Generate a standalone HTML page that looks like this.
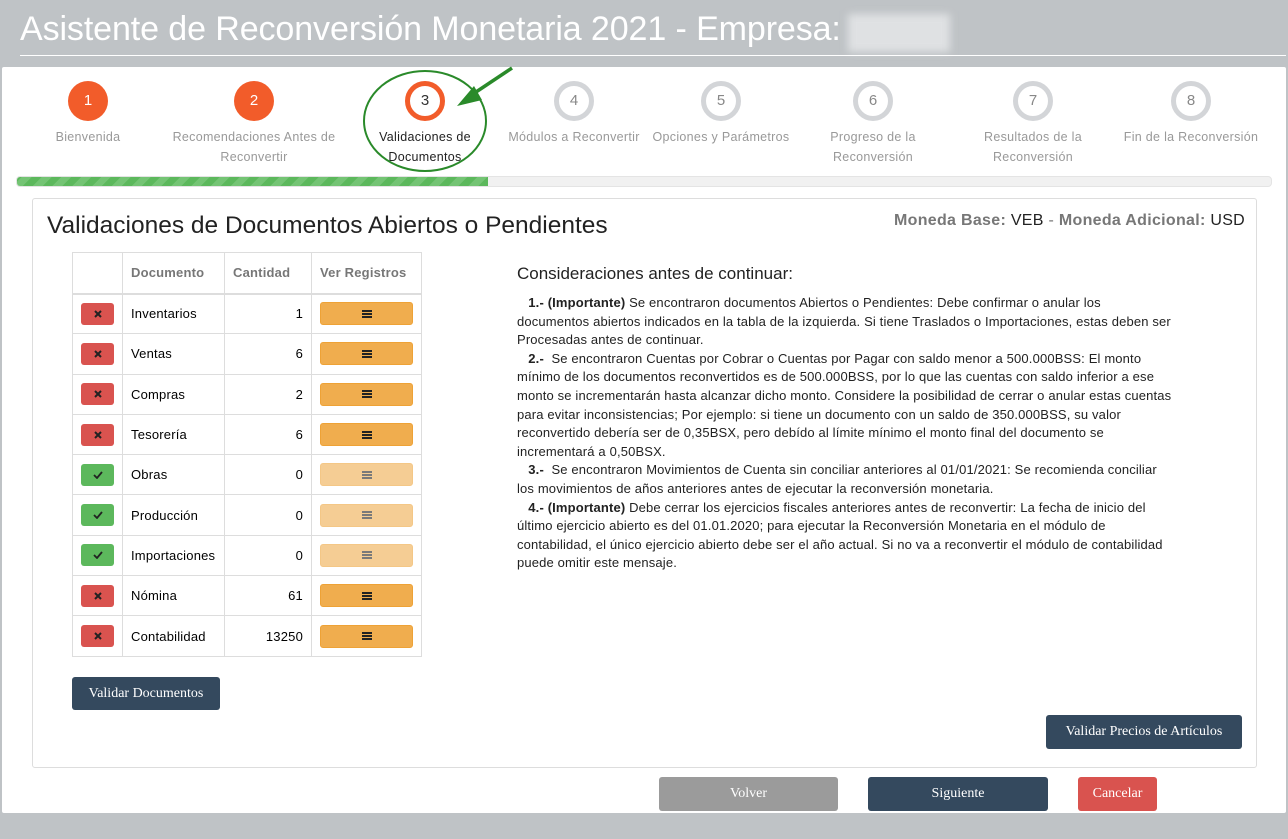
<!DOCTYPE html>
<html><head><meta charset="utf-8"><style>
*{box-sizing:border-box;margin:0;padding:0}
body{width:1288px;height:839px;background:#bfc3c6;font-family:"Liberation Sans",sans-serif;position:relative;overflow:hidden}
.abs{position:absolute}
.title{left:20px;top:10px;color:#fff;font-size:34px;letter-spacing:-0.1px;white-space:nowrap}
.blur{left:848px;top:14px;width:102px;height:38px;background:#dfe1e3;filter:blur(4px)}
.hr{left:20px;top:55px;width:1266px;height:1px;background:#fff}
.panel{left:2px;top:67px;width:1284px;height:746px;background:#fff;border-radius:2px}
.step{position:absolute;width:40px;height:40px;border-radius:50%;top:81px;text-align:center;line-height:40px;font-size:15px}
.done{background:#f25c2a;color:#fff}
.cur{border:5px solid #f25c2a;line-height:30px;color:#333;background:#fff}
.todo{border:5px solid #d3d5d8;line-height:30px;color:#888;background:#fff}
.lbl{position:absolute;top:127px;font-size:12.5px;color:#999;text-align:center;line-height:20px;letter-spacing:.3px;white-space:nowrap}
.bar{left:16px;top:176px;width:1256px;height:11px;background:#f1f1f1;border-radius:4px;overflow:hidden;border:1px solid #e4e4e4}
.bar div{width:471px;height:100%;background:repeating-linear-gradient(-45deg,#5cb85c 0 7px,#74c474 7px 14px)}
.box{left:32px;top:198px;width:1225px;height:570px;border:1px solid #ddd;border-radius:3px}
table{position:absolute;left:72px;top:252px;border-collapse:collapse;font-size:13px}
td,th{border:1px solid #ddd;height:40.3px;padding:0 8px;letter-spacing:.2px}
th{color:#777;font-weight:bold;text-align:left;height:41px;border-bottom:2px solid #ddd}
.x,.ok{width:33px;height:22px;border-radius:3px;margin:auto;display:flex;align-items:center;justify-content:center}
.x{background:#d9534f}.ok{background:#5cb85c}
.vb{width:93px;height:23px;border-radius:3px;background:#f0ad4e;border:1px solid #eea236;margin:auto;display:flex;align-items:center;justify-content:center}
.vb.dis{opacity:.6}
.li{display:inline-block;width:10px;height:8px;background:linear-gradient(#222 0 2px,transparent 2px 3px,#222 3px 5px,transparent 5px 6px,#222 6px 8px)}
.btn{position:absolute;color:#fff;font-family:"Liberation Serif",serif;font-size:14px;display:flex;align-items:center;justify-content:center;border-radius:3px}
.nv{background:#34495e}
.txt{left:517px;top:294px;font-size:13px;line-height:18.6px;color:#222;white-space:nowrap;letter-spacing:.15px}
</style></head><body>
<div class="abs title">Asistente de Reconversión Monetaria 2021 - Empresa:</div>
<div class="abs blur"></div>
<div class="abs hr"></div>
<div class="abs panel"></div>
<div class="step done" style="left:68px">1</div>
<div class="step done" style="left:234px">2</div>
<div class="step cur" style="left:405px">3</div>
<div class="step todo" style="left:554px">4</div>
<div class="step todo" style="left:701px">5</div>
<div class="step todo" style="left:853px">6</div>
<div class="step todo" style="left:1013px">7</div>
<div class="step todo" style="left:1171px">8</div>
<div class="lbl" style="left:38px;width:100px">Bienvenida</div>
<div class="lbl" style="left:164px;width:180px">Recomendaciones Antes de<br>Reconvertir</div>
<div class="lbl" style="left:365px;width:120px;color:#222">Validaciones de<br>Documentos</div>
<div class="lbl" style="left:504px;width:140px">Módulos a Reconvertir</div>
<div class="lbl" style="left:646px;width:150px">Opciones y Parámetros</div>
<div class="lbl" style="left:813px;width:120px">Progreso de la<br>Reconversión</div>
<div class="lbl" style="left:973px;width:120px">Resultados de la<br>Reconversión</div>
<div class="lbl" style="left:1121px;width:140px">Fin de la Reconversión</div>
<svg class="abs" style="left:360px;top:64px" width="160" height="114"><ellipse cx="65" cy="57" rx="61" ry="50" fill="none" stroke="#2a8a2a" stroke-width="2"/><line x1="152" y1="4" x2="110" y2="32" stroke="#2a8a2a" stroke-width="3.5"/><polygon points="97,42 114,22 122,36" fill="#2a8a2a"/></svg>
<div class="abs bar"><div></div></div>
<div class="abs box"></div>
<div class="abs" style="left:47px;top:212px;font-size:24.5px;color:#222">Validaciones de Documentos Abiertos o Pendientes</div>
<div class="abs" style="left:894px;top:212px;font-size:16px;color:#222;letter-spacing:.3px"><b style="color:#777">Moneda Base:</b> VEB <span style="color:#777">-</span> <b style="color:#777">Moneda Adicional:</b> USD</div>
<table>
<tr><th style="width:50px"></th><th style="width:102px">Documento</th><th style="width:87px">Cantidad</th><th style="width:110px">Ver Registros</th></tr>
<tr><td><div class="x"><svg width="8" height="8"><path d="M1 1L7 7M7 1L1 7" stroke="#222" stroke-width="2"/></svg></div></td><td>Inventarios</td><td align="right">1</td><td><div class="vb"><span class="li"></span></div></td></tr>
<tr><td><div class="x"><svg width="8" height="8"><path d="M1 1L7 7M7 1L1 7" stroke="#222" stroke-width="2"/></svg></div></td><td>Ventas</td><td align="right">6</td><td><div class="vb"><span class="li"></span></div></td></tr>
<tr><td><div class="x"><svg width="8" height="8"><path d="M1 1L7 7M7 1L1 7" stroke="#222" stroke-width="2"/></svg></div></td><td>Compras</td><td align="right">2</td><td><div class="vb"><span class="li"></span></div></td></tr>
<tr><td><div class="x"><svg width="8" height="8"><path d="M1 1L7 7M7 1L1 7" stroke="#222" stroke-width="2"/></svg></div></td><td>Tesorería</td><td align="right">6</td><td><div class="vb"><span class="li"></span></div></td></tr>
<tr><td><div class="ok"><svg width="10" height="8"><path d="M1 4L4 7L9 1" stroke="#222" stroke-width="1.8" fill="none"/></svg></div></td><td>Obras</td><td align="right">0</td><td><div class="vb dis"><span class="li"></span></div></td></tr>
<tr><td><div class="ok"><svg width="10" height="8"><path d="M1 4L4 7L9 1" stroke="#222" stroke-width="1.8" fill="none"/></svg></div></td><td>Producción</td><td align="right">0</td><td><div class="vb dis"><span class="li"></span></div></td></tr>
<tr><td><div class="ok"><svg width="10" height="8"><path d="M1 4L4 7L9 1" stroke="#222" stroke-width="1.8" fill="none"/></svg></div></td><td>Importaciones</td><td align="right">0</td><td><div class="vb dis"><span class="li"></span></div></td></tr>
<tr><td><div class="x"><svg width="8" height="8"><path d="M1 1L7 7M7 1L1 7" stroke="#222" stroke-width="2"/></svg></div></td><td>Nómina</td><td align="right">61</td><td><div class="vb"><span class="li"></span></div></td></tr>
<tr><td><div class="x"><svg width="8" height="8"><path d="M1 1L7 7M7 1L1 7" stroke="#222" stroke-width="2"/></svg></div></td><td>Contabilidad</td><td align="right">13250</td><td><div class="vb"><span class="li"></span></div></td></tr>
</table>
<div class="abs" style="left:517px;top:264px;font-size:17px;color:#222">Consideraciones antes de continuar:</div>
<div class="abs txt">&nbsp;&nbsp;&nbsp;<b>1.-</b> <b>(Importante)</b> Se encontraron documentos Abiertos o Pendientes: Debe confirmar o anular los<br>documentos abiertos indicados en la tabla de la izquierda. Si tiene Traslados o Importaciones, estas deben ser<br>Procesadas antes de continuar.<br>&nbsp;&nbsp;&nbsp;<b>2.-</b>&nbsp; Se encontraron Cuentas por Cobrar o Cuentas por Pagar con saldo menor a 500.000BSS: El monto<br>mínimo de los documentos reconvertidos es de 500.000BSS, por lo que las cuentas con saldo inferior a ese<br>monto se incrementarán hasta alcanzar dicho monto. Considere la posibilidad de cerrar o anular estas cuentas<br>para evitar inconsistencias; Por ejemplo: si tiene un documento con un saldo de 350.000BSS, su valor<br>reconvertido debería ser de 0,35BSX, pero debído al límite mínimo el monto final del documento se<br>incrementará a 0,50BSX.<br>&nbsp;&nbsp;&nbsp;<b>3.-</b>&nbsp; Se encontraron Movimientos de Cuenta sin conciliar anteriores al 01/01/2021: Se recomienda conciliar<br>los movimientos de años anteriores antes de ejecutar la reconversión monetaria.<br>&nbsp;&nbsp;&nbsp;<b>4.-</b> <b>(Importante)</b> Debe cerrar los ejercicios fiscales anteriores antes de reconvertir: La fecha de inicio del<br>último ejercicio abierto es del 01.01.2020; para ejecutar la Reconversión Monetaria en el módulo de<br>contabilidad, el único ejercicio abierto debe ser el año actual. Si no va a reconvertir el módulo de contabilidad<br>puede omitir este mensaje.</div>
<div class="btn nv" style="left:72px;top:677px;width:148px;height:33px">Validar Documentos</div>
<div class="btn nv" style="left:1046px;top:715px;width:196px;height:34px">Validar Precios de Artículos</div>
<div class="btn" style="left:659px;top:777px;width:179px;height:34px;background:#9b9b9b">Volver</div>
<div class="btn nv" style="left:868px;top:777px;width:180px;height:34px">Siguiente</div>
<div class="btn" style="left:1078px;top:777px;width:79px;height:34px;background:#d9534f">Cancelar</div>
</body></html>
